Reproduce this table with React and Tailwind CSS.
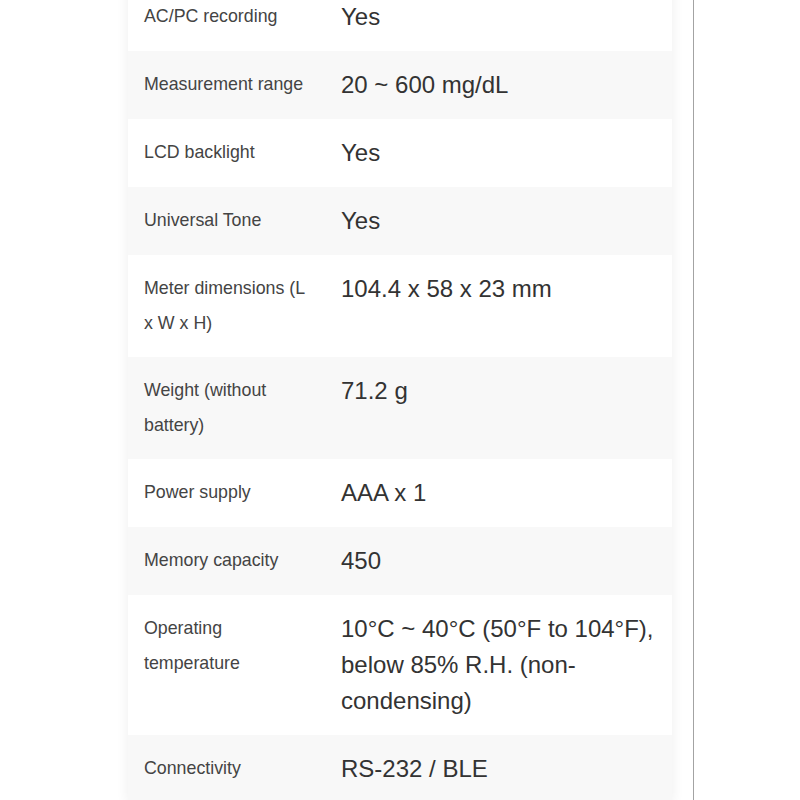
import React from "react";

const specs = [
  ["AC/PC recording", "Yes"],
  ["Measurement range", "20 ~ 600 mg/dL"],
  ["LCD backlight", "Yes"],
  ["Universal Tone", "Yes"],
  ["Meter dimensions (L x W x H)", "104.4 x 58 x 23 mm"],
  ["Weight (without battery)", "71.2 g"],
  ["Power supply", "AAA x 1"],
  ["Memory capacity", "450"],
  ["Operating temperature", "10°C ~ 40°C (50°F to 104°F), below 85% R.H. (non-condensing)"],
  ["Connectivity", "RS-232 / BLE"],
];

const App = () => {
  return (
    <div className="h-[800px] w-[800px] overflow-hidden bg-white flex" style={{ fontFamily: '"Liberation Sans", Arial, sans-serif' }}>
      <div className="ml-[128px] w-[544px] -mt-[17px] self-start bg-white shadow-[0_0_12px_rgba(0,0,0,0.07)]">
        <table className="w-full border-collapse">
          <tbody>
            {specs.map(([label, value], i) => (
              <tr key={label} className={i % 2 === 1 ? "bg-[#f8f8f8]" : "bg-white"}>
                <td className="w-[197px] align-top py-4 pl-4 pr-4 text-[17.8px] leading-[35px] text-[#444]">
                  {label}
                </td>
                <td className="align-top py-4 pl-4 pr-4 text-[24px] leading-[36px] text-[#333]">
                  {value}
                </td>
              </tr>
            ))}
          </tbody>
        </table>
      </div>
      <div className="ml-[21px] w-px h-full bg-[#a3a3a3]"></div>
    </div>
  );
};

export default App;
